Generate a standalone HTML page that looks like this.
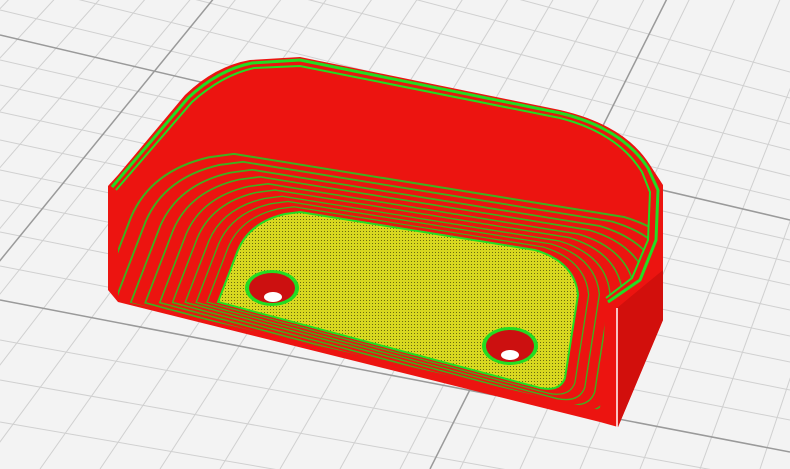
<!DOCTYPE html>
<html><head><style>html,body{margin:0;padding:0;background:#f3f3f3;overflow:hidden;width:790px;height:469px}svg{display:block}</style></head>
<body>
<svg width="790" height="469" viewBox="0 0 790 469" xmlns="http://www.w3.org/2000/svg">
<defs>
<pattern id="yel" width="3" height="3" patternUnits="userSpaceOnUse"><rect width="3" height="3" fill="#d8d820"/><rect width="1" height="1" fill="#6a6a10"/></pattern>
<clipPath id="inner"><path d="M118,190 L192,102 Q222,75 254,68 L300,66 L560,118 Q618,133 642,172 L650,192 L648,240 L632,278 L606,298 L600,410 L118,300 Z"/></clipPath>
<path id="fl" d="M218,302 L238,250 Q250,222 285,214 L300,212 L535,250 Q575,262 578,295 L565,378 Q560,392 540,388 Z"/>
</defs>
<rect width="790" height="469" fill="#f3f3f3"/>
<g stroke="#d0d0d0" stroke-width="1">
<line x1="0" y1="10" x2="790" y2="200"/><line x1="0" y1="60" x2="790" y2="240"/>
<line x1="0" y1="85" x2="790" y2="262"/><line x1="0" y1="112" x2="790" y2="285"/>
<line x1="0" y1="140" x2="790" y2="310"/><line x1="0" y1="170" x2="790" y2="336"/>
<line x1="0" y1="200" x2="790" y2="362"/><line x1="0" y1="232" x2="790" y2="390"/>
<line x1="0" y1="266" x2="790" y2="420"/><line x1="0" y1="340" x2="790" y2="484"/>
<line x1="0" y1="380" x2="790" y2="520"/><line x1="0" y1="422" x2="790" y2="558"/>
<line x1="0" y1="-20" x2="790" y2="176"/><line x1="0" y1="-50" x2="790" y2="150"/>
<line x1="0" y1="-80" x2="790" y2="124"/><line x1="0" y1="-110" x2="790" y2="98"/>
<line x1="0" y1="-140" x2="790" y2="72"/>
</g>
<g stroke="#d0d0d0" stroke-width="1">
<line x1="1400" y1="-1456" x2="-560" y2="469"/><line x1="1400" y1="-1456" x2="-500" y2="469"/>
<line x1="1400" y1="-1456" x2="-440" y2="469"/><line x1="1400" y1="-1456" x2="-380" y2="469"/>
<line x1="1400" y1="-1456" x2="-320" y2="469"/><line x1="1400" y1="-1456" x2="-260" y2="469"/>
<line x1="1400" y1="-1456" x2="-200" y2="469"/><line x1="1400" y1="-1456" x2="-140" y2="469"/>
<line x1="1400" y1="-1456" x2="-80" y2="469"/><line x1="1400" y1="-1456" x2="-20" y2="469"/>
<line x1="1400" y1="-1456" x2="40" y2="469"/><line x1="1400" y1="-1456" x2="100" y2="469"/>
<line x1="1400" y1="-1456" x2="160" y2="469"/><line x1="1400" y1="-1456" x2="220" y2="469"/>
<line x1="1400" y1="-1456" x2="280" y2="469"/><line x1="1400" y1="-1456" x2="340" y2="469"/>
<line x1="1400" y1="-1456" x2="400" y2="469"/><line x1="1400" y1="-1456" x2="460" y2="469"/>
<line x1="1400" y1="-1456" x2="520" y2="469"/><line x1="1400" y1="-1456" x2="580" y2="469"/>
<line x1="1400" y1="-1456" x2="640" y2="469"/><line x1="1400" y1="-1456" x2="700" y2="469"/>
<line x1="1400" y1="-1456" x2="760" y2="469"/><line x1="1400" y1="-1456" x2="820" y2="469"/>
</g>
<g stroke="#9a9a9a" stroke-width="1.5">
<line x1="0" y1="35" x2="790" y2="220"/><line x1="0" y1="300" x2="790" y2="452"/>
<line x1="1400" y1="-1456" x2="-170" y2="469"/><line x1="1400" y1="-1456" x2="430" y2="469"/>
</g>
<!-- outer body -->
<path d="M108,186 L118,175 L185,95 Q215,66 250,60 L300,57 L560,110 Q625,125 650,165 L663,185 L663,320 L618,427 L600,422 L118,302 L108,290 Z" fill="#ec1410"/>
<path d="M617,308 L663,270 L663,320 L618,427 Z" fill="#d20f0c"/>
<!-- inner rings -->
<g clip-path="url(#inner)" fill="none" stroke="#22cc22" stroke-width="1.2" opacity="0.85">
<use href="#fl" transform="translate(400 300) scale(1.06) translate(-400 -300)"/>
<use href="#fl" transform="translate(400 300) scale(1.12) translate(-400 -300)"/>
<use href="#fl" transform="translate(400 300) scale(1.18) translate(-400 -300)"/>
<use href="#fl" transform="translate(400 300) scale(1.25) translate(-400 -300)"/>
<use href="#fl" transform="translate(400 300) scale(1.32) translate(-400 -300)"/>
<use href="#fl" transform="translate(400 300) scale(1.40) translate(-400 -300)"/>
<use href="#fl" transform="translate(400 300) scale(1.48) translate(-400 -300)"/>
<use href="#fl" transform="translate(400 300) scale(1.57) translate(-400 -300)"/>
<use href="#fl" transform="translate(400 300) scale(1.66) translate(-400 -300)"/>
</g>
<!-- rim green -->
<path d="M112,187 L188,98 Q218,70 252,63 L300,60 L560,113 Q622,128 648,168 L658,190 L656,240 L640,280 L608,302" fill="none" stroke="#22dd22" stroke-width="3"/>
<path d="M116,190 L192,102 Q222,75 254,68 L300,66 L560,118 Q618,133 642,172 L650,192 L648,240 L632,278 L606,298" fill="none" stroke="#22dd22" stroke-width="2"/>
<!-- floor -->
<use href="#fl" fill="url(#yel)"/>
<use href="#fl" fill="none" stroke="#22dd22" stroke-width="2"/>
<!-- holes -->
<ellipse cx="272" cy="288" rx="27" ry="18" fill="#22dd22"/>
<ellipse cx="272" cy="288" rx="23" ry="15" fill="#cc1010"/>
<ellipse cx="273" cy="297" rx="9" ry="5" fill="#fff"/>
<ellipse cx="510" cy="346" rx="28" ry="19" fill="#22dd22"/>
<ellipse cx="510" cy="346" rx="24" ry="16" fill="#cc1010"/>
<ellipse cx="510" cy="355" rx="9" ry="5" fill="#fff"/>
<line x1="617" y1="308" x2="617" y2="427" stroke="#fff" stroke-width="1.5"/>
</svg>
</body></html>
